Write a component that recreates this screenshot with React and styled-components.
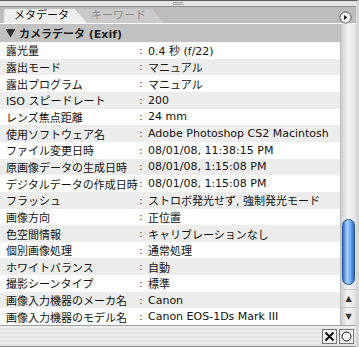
import React from "react";
import styled, { createGlobalStyle } from "styled-components";

const GlobalStyle = createGlobalStyle`
  html, body {
    margin: 0;
    padding: 0;
    background: #ffffff;
  }
  body {
    font-family: "DejaVu Sans", "Noto Sans CJK JP", sans-serif;
  }
`;

const rows = [
  ["露光量", "0.4 秒 (f/22)"],
  ["露出モード", "マニュアル"],
  ["露出プログラム", "マニュアル"],
  ["ISO スピードレート", "200"],
  ["レンズ焦点距離", "24 mm"],
  ["使用ソフトウェア名", "Adobe Photoshop CS2 Macintosh"],
  ["ファイル変更日時", "08/01/08, 11:38:15 PM"],
  ["原画像データの生成日時", "08/01/08, 1:15:08 PM"],
  ["デジタルデータの作成日時", "08/01/08, 1:15:08 PM"],
  ["フラッシュ", "ストロボ発光せず, 強制発光モード"],
  ["画像方向", "正位置"],
  ["色空間情報", "キャリブレーションなし"],
  ["個別画像処理", "通常処理"],
  ["ホワイトバランス", "自動"],
  ["撮影シーンタイプ", "標準"],
  ["画像入力機器のメーカ名", "Canon"],
  ["画像入力機器のモデル名", "Canon EOS-1Ds Mark III"],
];

const Panel = styled.div`
  width: 359px;
  height: 347px;
  box-sizing: border-box;
  display: flex;
  flex-direction: column;
  background: #ffffff;
  border-top: 1px solid #5a5a5a;
  border-right: 3px solid #d6d6d6;
  box-shadow: inset -1px 0 0 #6a6a6a;
  overflow: hidden;
`;

const Grip = styled.div`
  height: 5px;
  background: #e4e4e4;
  border-bottom: 1px solid #8c8c8c;
  display: flex;
  justify-content: center;
  align-items: center;
  span {
    width: 10px;
    height: 3px;
    border-top: 1px solid #9a9a9a;
    border-bottom: 1px solid #9a9a9a;
    box-sizing: border-box;
  }
`;

const TabBar = styled.div`
  height: 16px;
  background: #bdbdbd;
  border-bottom: 1px solid #ffffff;
  display: flex;
  align-items: flex-end;
  padding-left: 4px;
  padding-right: 4px;
`;

const Tab = styled.div`
  height: 14px;
  box-sizing: border-box;
  padding: ${(p) => (p.$active ? "0 18px 0 10px" : "0 18px 0 12px")};
  font-size: 11px;
  line-height: 14px;
  color: ${(p) => (p.$active ? "#111111" : "#8a8a8a")};
  background: ${(p) => (p.$active ? "#eeeeee" : "#cbcbcb")};
  clip-path: polygon(0 0, calc(100% - 12px) 0, 100% 100%, 0 100%);
  margin-left: ${(p) => (p.$active ? "0" : "-8px")};
  z-index: ${(p) => (p.$active ? 2 : 1)};
  border-top-left-radius: 2px;
`;

const MenuButton = styled.div`
  margin-left: auto;
  margin-bottom: -1px;
  width: 13px;
  height: 13px;
  display: flex;
`;

const Body = styled.div`
  flex: 1;
  display: flex;
  min-height: 0;
`;

const Content = styled.div`
  flex: 1;
  display: flex;
  flex-direction: column;
`;

const SectionHeader = styled.div`
  height: 18px;
  background: #c2c2c2;
  display: flex;
  align-items: center;
  padding-left: 5px;
  font-size: 11px;
  font-weight: bold;
  color: #1e1e1e;
  gap: 3px;
`;

const Row = styled.div`
  height: 16.7px;
  display: flex;
  align-items: center;
  font-size: 11px;
  color: #111111;
  background: ${(p) => (p.$odd ? "#ededed" : "#ffffff")};
  white-space: nowrap;
`;

const Label = styled.span`
  min-width: 133px;
  padding-left: 6px;
`;

const Colon = styled.span`
  width: 8px;
  color: #444444;
`;

const Value = styled.span`
  padding-left: 1px;
`;

const ScrollBar = styled.div`
  width: 15px;
  display: flex;
  flex-direction: column;
  background: linear-gradient(to right, #cfcfcf, #f4f4f4 45%, #e2e2e2);
  border-left: 1px solid #bdbdbd;
`;

const Track = styled.div`
  flex: 1;
  display: flex;
  flex-direction: column;
  padding-top: 195px;
  align-items: center;
`;

const Thumb = styled.div`
  width: 13px;
  height: 66px;
  border-radius: 7px;
  box-sizing: border-box;
  border: 1px solid #23509a;
  background: linear-gradient(to right, #3a76cc, #a9d1fa 40%, #6ba6ef 70%, #2f69c4);
`;

const Arrow = styled.div`
  height: 17px;
  display: flex;
  align-items: center;
  justify-content: center;
  border-top: 1px solid #c8c8c8;
  font-size: 8px;
  color: #333333;
`;

const Footer = styled.div`
  height: 20px;
  border-top: 1px solid #a0a0a0;
  border-bottom: 1px solid #8a8a8a;
  background: repeating-linear-gradient(to bottom, #eeeeee 0, #eeeeee 2px, #e4e4e4 2px, #e4e4e4 4px);
  display: flex;
  justify-content: flex-end;
  align-items: center;
  gap: 2px;
  padding-right: 2px;
`;

const FooterButton = styled.div`
  width: 15px;
  height: 15px;
  box-sizing: border-box;
  border: 1px solid #777777;
  background: #f6f6f6;
  display: flex;
  align-items: center;
  justify-content: center;
`;

export default function App() {
  return (
    <>
      <GlobalStyle />
      <Panel>
        <Grip>
          <span />
        </Grip>
        <TabBar>
          <Tab $active>メタデータ</Tab>
          <Tab>キーワード</Tab>
          <MenuButton>
            <svg width="13" height="13" viewBox="0 0 13 13">
              <circle cx="6.5" cy="6.5" r="5.6" fill="#f2f2f2" stroke="#555" strokeWidth="1" />
              <path d="M5 4 L8.5 6.5 L5 9 Z" fill="#222" />
            </svg>
          </MenuButton>
        </TabBar>
        <Body>
          <Content>
            <SectionHeader>
              <svg width="11" height="10" viewBox="0 0 11 10">
                <path d="M0.5 1 L10.5 1 L5.5 9.5 Z" fill="#333" />
              </svg>
              カメラデータ (Exif)
            </SectionHeader>
            {rows.map(([label, value], i) => (
              <Row key={label} $odd={i % 2 === 1}>
                <Label>{label}</Label>
                <Colon>:</Colon>
                <Value>{value}</Value>
              </Row>
            ))}
          </Content>
          <ScrollBar>
            <Track>
              <Thumb />
            </Track>
            <Arrow>▲</Arrow>
            <Arrow>▼</Arrow>
          </ScrollBar>
        </Body>
        <Footer>
          <FooterButton>
            <svg width="11" height="11" viewBox="0 0 11 11">
              <path d="M1.5 1.5 L9.5 9.5 M9.5 1.5 L1.5 9.5" stroke="#111" strokeWidth="2" />
            </svg>
          </FooterButton>
          <FooterButton>
            <svg width="11" height="11" viewBox="0 0 11 11">
              <circle cx="5.5" cy="5.5" r="4.5" fill="none" stroke="#111" strokeWidth="1" />
            </svg>
          </FooterButton>
        </Footer>
      </Panel>
    </>
  );
}
